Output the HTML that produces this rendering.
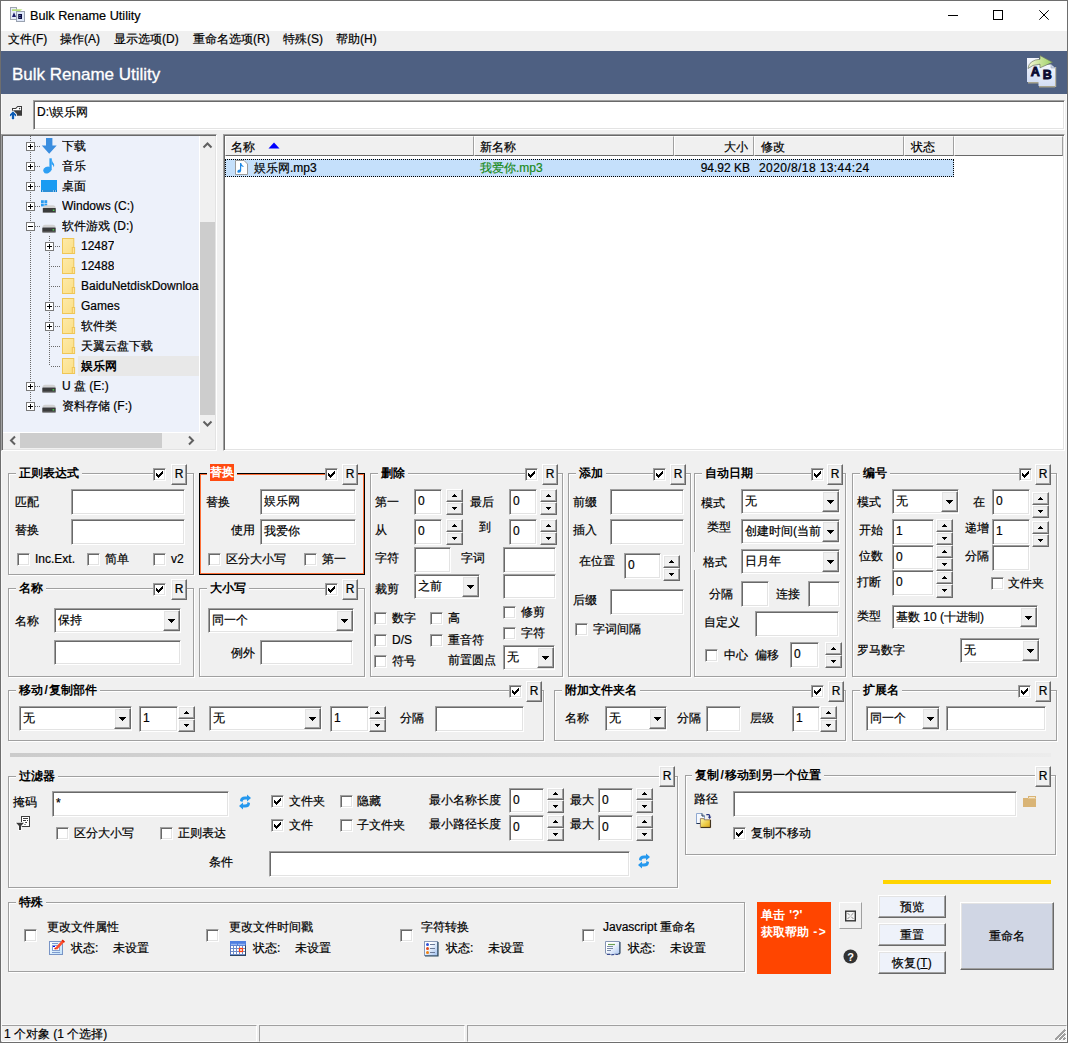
<!DOCTYPE html><html><head><meta charset="utf-8"><style>
*{box-sizing:content-box}
body{margin:0;width:1068px;height:1043px;overflow:hidden;background:#f0f0f0;font-family:"Liberation Sans",sans-serif;font-size:12px;color:#000;position:relative}
.t{position:absolute;white-space:nowrap;line-height:16px;-webkit-text-stroke:0.2px currentColor}
.ed{position:absolute;background:#fff;border:1px solid;border-color:#a0a0a0 #fff #fff #a0a0a0;box-shadow:inset 1px 1px 0 #696969,inset -1px -1px 0 #e3e3e3}
.bt{position:absolute;border:1px solid;border-color:#fff #696969 #696969 #fff;box-shadow:inset -1px -1px 0 #a0a0a0,inset 1px 1px 0 #e3e3e3}
.cb{position:absolute;background:#fff;border:1px solid;border-color:#a0a0a0 #fff #fff #a0a0a0;box-shadow:inset 1px 1px 0 #696969,inset -1px -1px 0 #e3e3e3}
.gb{position:absolute;border:1px solid #a0a0a0;box-shadow:inset 1px 1px 0 #fff,1px 1px 0 #fff}
.gt{font-weight:bold;background:#f0f0f0;-webkit-text-stroke:0}
</style></head><body>

<div style="position:absolute;left:0px;top:0px;width:1068px;height:1043px;box-sizing:border-box;border:1px solid #6e6e6e"></div>
<div style="position:absolute;left:1px;top:1px;width:1066px;height:1041px;box-sizing:border-box;border:1px solid #f8f8f8"></div>
<div style="position:absolute;left:1px;top:1px;width:1066px;height:30px;background:#fff"></div>
<svg style="position:absolute;left:9px;top:6px" width="16" height="16" viewBox="0 0 16 16">
<rect x="1.5" y="1.5" width="6" height="12" fill="#e6edf9" stroke="#a0a6b0"/><rect x="7.5" y="5.5" width="8" height="10" fill="#dfe8fa" stroke="#9aa2b0"/>
<path d="M3 11 L5 6.3 L7 11 Z" fill="#1c1c6a"/><rect x="9.2" y="8" width="3.8" height="5" fill="#0c0c40"/><rect x="10.2" y="9" width="1.4" height="1" fill="#7080c0"/><rect x="10.2" y="11" width="1.4" height="1" fill="#7080c0"/>
<path d="M3 3.2 H11 L13.5 3.5 L11 5 H3 Z" fill="#b8e07a"/></svg>
<div class="t" style="left:30px;top:7.5px;font-size:12.7px;line-height:16px;color:#000;">Bulk Rename Utility</div>
<div style="position:absolute;left:948px;top:15px;width:10px;height:1px;background:#000"></div>
<div style="position:absolute;left:993px;top:10px;width:10px;height:10px;box-sizing:border-box;border:1px solid #000"></div>
<svg style="position:absolute;left:1039px;top:10px" width="10" height="10"><path d="M0.3 0.3 L9.7 9.7 M9.7 0.3 L0.3 9.7" stroke="#000" stroke-width="1"/></svg>
<div style="position:absolute;left:1px;top:31px;width:1066px;height:20px;background:#f0f0f0"></div>
<div class="t" style="left:8px;top:31.0px;font-size:12px;line-height:16px;color:#000;">文件(F)</div>
<div class="t" style="left:60px;top:31.0px;font-size:12px;line-height:16px;color:#000;">操作(A)</div>
<div class="t" style="left:114px;top:31.0px;font-size:12px;line-height:16px;color:#000;">显示选项(D)</div>
<div class="t" style="left:193px;top:31.0px;font-size:12px;line-height:16px;color:#000;">重命名选项(R)</div>
<div class="t" style="left:283px;top:31.0px;font-size:12px;line-height:16px;color:#000;">特殊(S)</div>
<div class="t" style="left:336px;top:31.0px;font-size:12px;line-height:16px;color:#000;">帮助(H)</div>
<div style="position:absolute;left:1px;top:51px;width:1066px;height:43px;background:#4e6082"></div>
<div class="t" style="left:12px;top:64.5px;font-size:17px;line-height:20px;color:#fff;-webkit-text-stroke:0.3px #fff">Bulk Rename Utility</div>
<svg style="position:absolute;left:1018px;top:52px" width="46" height="40" viewBox="0 0 46 40">
<defs><linearGradient id="pg" x1="0" y1="0" x2="0" y2="1"><stop offset="0" stop-color="#f4f7fd"/><stop offset="1" stop-color="#d3def4"/></linearGradient>
<linearGradient id="ar" x1="0" y1="0" x2="1" y2="0"><stop offset="0" stop-color="#f6f8dc"/><stop offset="0.5" stop-color="#c9e49a"/><stop offset="1" stop-color="#9bd068"/></linearGradient></defs>
<rect x="10" y="30" width="12" height="1.5" fill="#a8a48e"/>
<rect x="9" y="6" width="12" height="24" fill="url(#pg)"/>
<rect x="21" y="34" width="16" height="1.5" fill="#a8a48e"/><rect x="37" y="15" width="1.2" height="20" fill="#b8b4a0"/>
<path d="M20.5 12.5 H33 L37 16 V34 H20.5 Z" fill="url(#pg)"/>
<path d="M33 12.5 V16 H37" fill="#c8d2e6" stroke="#9aa4b8" stroke-width="0.6"/>
<path d="M10 16.5 Q11 8 22 7.2 L22 3.5 L34.5 10.3 L22 15.8 L22 12.2 Q14 12.5 10 16.5 Z" fill="url(#ar)" stroke="#6c7460" stroke-width="0.7"/>
<text x="12.8" y="23.8" font-size="12.5" font-weight="bold" fill="#0a0a30" stroke="#0a0a30" stroke-width="0.9" font-family="Liberation Sans">A</text>
<text x="24.8" y="27" font-size="12.5" font-weight="bold" fill="#0a0a30" stroke="#0a0a30" stroke-width="0.9" font-family="Liberation Sans">B</text>
</svg>
<svg style="position:absolute;left:4px;top:98px" width="30" height="30" viewBox="4 98 30 30">
<path d="M12 108 H15.5 L17.5 106 H22 V115.8 H12 Z" fill="#3b3b3b"/>
<path d="M13 109 H16 L17.9 107 H21 V110.2 H13 Z" fill="#fff"/><circle cx="19.6" cy="108.6" r="0.8" fill="#3b3b3b"/>
<path d="M13 111.3 L16.1 114.4 L16.1 116.7 L14.2 114.9 L14.2 119.2 L11.8 119.2 L11.8 114.9 L9.9 116.7 L9.9 114.4 Z" fill="#fff" stroke="#fff" stroke-width="1.6"/>
<path d="M13 111.3 L16.1 114.4 L16.1 116.7 L14.2 114.9 L14.2 119.2 L11.8 119.2 L11.8 114.9 L9.9 116.7 L9.9 114.4 Z" fill="#0b5cb5"/>
</svg>
<div class="ed" style="left:33px;top:100px;width:1030px;height:28px"></div>
<div class="t" style="left:37px;top:104.0px;font-size:12px;line-height:16px;color:#000;">D:\娱乐网</div>
<div style="position:absolute;left:1px;top:134px;width:214px;height:315px;border:1px solid;border-color:#a0a0a0 #fff #fff #a0a0a0;box-shadow:inset 1px 1px 0 #696969,inset -1px -1px 0 #e3e3e3;background:#f0f0f0"></div>
<div style="position:absolute;left:3px;top:136px;width:196px;height:296px;background:#edf1fa"></div>
<div style="position:absolute;left:199px;top:136px;width:1px;height:297px;background:#fff"></div>
<div style="position:absolute;left:3px;top:432px;width:197px;height:1px;background:#fff"></div>
<div style="position:absolute;left:200px;top:222px;width:15px;height:193px;background:#cdcdcd"></div>
<svg style="position:absolute;left:200px;top:136px" width="15" height="17"><path d="M3.5 11.5 L7.5 7.5 L11.5 11.5" stroke="#606060" stroke-width="2" fill="none"/></svg>
<svg style="position:absolute;left:200px;top:415px" width="15" height="17"><path d="M3.5 6.5 L7.5 10.5 L11.5 6.5" stroke="#606060" stroke-width="2" fill="none"/></svg>
<div style="position:absolute;left:20px;top:433px;width:142px;height:15px;background:#cdcdcd"></div>
<svg style="position:absolute;left:3px;top:433px" width="17" height="15"><path d="M13 3.5 L9 7.5 L13 11.5" stroke="#606060" stroke-width="2" fill="none" transform="translate(-1,0)"/></svg>
<svg style="position:absolute;left:183px;top:433px" width="17" height="15"><path d="M6 3.5 L10 7.5 L6 11.5" stroke="#606060" stroke-width="2" fill="none"/></svg>
<div style="position:absolute;left:30px;top:136px;width:1px;height:270px;background:repeating-linear-gradient(to bottom,#6a6a6a 0 1px,transparent 1px 2px)"></div>
<div style="position:absolute;left:49px;top:236px;width:1px;height:130px;background:repeating-linear-gradient(to bottom,#6a6a6a 0 1px,transparent 1px 2px)"></div>
<div style="position:absolute;left:31px;top:146px;width:9px;height:1px;background:repeating-linear-gradient(to right,#6a6a6a 0 1px,transparent 1px 2px)"></div>
<div style="position:absolute;left:26px;top:142px;width:7px;height:7px;border:1px solid #7a7a7a;background:#fff"></div>
<div style="position:absolute;left:28px;top:146px;width:5px;height:1px;background:#000"></div>
<div style="position:absolute;left:30px;top:144px;width:1px;height:5px;background:#000"></div>
<div style="position:absolute;left:41px;top:138px;width:16px;height:16px"><svg width="16" height="16" viewBox="0 0 16 16"><path d="M5 0 L11.4 0 L11.4 7.6 L15.7 7.6 L8.2 15.7 L0.8 7.6 L5 7.6 Z" fill="#3a8ddf"/></svg></div>
<div class="t" style="left:62px;top:138px;max-width:137px;overflow:hidden">下载</div>
<div style="position:absolute;left:31px;top:166px;width:9px;height:1px;background:repeating-linear-gradient(to right,#6a6a6a 0 1px,transparent 1px 2px)"></div>
<div style="position:absolute;left:26px;top:162px;width:7px;height:7px;border:1px solid #7a7a7a;background:#fff"></div>
<div style="position:absolute;left:28px;top:166px;width:5px;height:1px;background:#000"></div>
<div style="position:absolute;left:30px;top:164px;width:1px;height:5px;background:#000"></div>
<div style="position:absolute;left:41px;top:158px;width:16px;height:16px"><svg width="16" height="16" viewBox="0 0 16 16"><ellipse cx="6.2" cy="12" rx="4" ry="3.3" fill="#2d9ff4" transform="rotate(-25 6.2 12)"/><rect x="8.4" y="0.3" width="2.3" height="12" fill="#2d9ff4"/><path d="M10.5 0.3 Q11 4 13 6 Q13.5 8 12.8 9.2 Q12.3 6.8 10.5 6 Z" fill="#2d9ff4"/></svg></div>
<div class="t" style="left:62px;top:158px;max-width:137px;overflow:hidden">音乐</div>
<div style="position:absolute;left:31px;top:186px;width:9px;height:1px;background:repeating-linear-gradient(to right,#6a6a6a 0 1px,transparent 1px 2px)"></div>
<div style="position:absolute;left:26px;top:182px;width:7px;height:7px;border:1px solid #7a7a7a;background:#fff"></div>
<div style="position:absolute;left:28px;top:186px;width:5px;height:1px;background:#000"></div>
<div style="position:absolute;left:30px;top:184px;width:1px;height:5px;background:#000"></div>
<div style="position:absolute;left:41px;top:178px;width:16px;height:16px"><svg width="16" height="16" viewBox="0 0 16 16"><rect x="0" y="2" width="16" height="12" fill="#189bf2"/><rect x="0" y="12" width="16" height="2" fill="#0f7fd0"/><rect x="1" y="12.5" width="1" height="1" fill="#fff"/><rect x="12" y="12.5" width="1" height="1" fill="#fff"/><rect x="14" y="12.5" width="1" height="1" fill="#fff"/><rect x="2" y="12.8" width="10" height="0.4" fill="#9fd4f8"/></svg></div>
<div class="t" style="left:62px;top:178px;max-width:137px;overflow:hidden">桌面</div>
<div style="position:absolute;left:31px;top:206px;width:9px;height:1px;background:repeating-linear-gradient(to right,#6a6a6a 0 1px,transparent 1px 2px)"></div>
<div style="position:absolute;left:26px;top:202px;width:7px;height:7px;border:1px solid #7a7a7a;background:#fff"></div>
<div style="position:absolute;left:28px;top:206px;width:5px;height:1px;background:#000"></div>
<div style="position:absolute;left:30px;top:204px;width:1px;height:5px;background:#000"></div>
<div style="position:absolute;left:41px;top:198px;width:16px;height:16px"><svg width="16" height="16" viewBox="0 0 16 16"><rect x="0" y="2.2" width="2.8" height="2.8" fill="#2b9cf2"/><rect x="3.4" y="2.2" width="2.8" height="2.8" fill="#2b9cf2"/><rect x="0" y="5.6" width="2.8" height="2.8" fill="#2b9cf2"/><rect x="3.4" y="5.6" width="2.8" height="2.8" fill="#2b9cf2"/><path d="M2 10 Q2.3 7.3 4.5 7.3 L12.3 7.3 Q14.5 7.3 14.8 10 Z" fill="#d2d2d2"/><rect x="1.8" y="10" width="13" height="4.7" rx="0.6" fill="#3b3b3b"/><rect x="1.8" y="14" width="13" height="0.7" fill="#8a8a8a"/><rect x="11.8" y="11.6" width="1.6" height="1.3" fill="#4fe04f"/></svg></div>
<div class="t" style="left:62px;top:198px;max-width:137px;overflow:hidden">Windows (C:)</div>
<div style="position:absolute;left:31px;top:226px;width:9px;height:1px;background:repeating-linear-gradient(to right,#6a6a6a 0 1px,transparent 1px 2px)"></div>
<div style="position:absolute;left:26px;top:222px;width:7px;height:7px;border:1px solid #7a7a7a;background:#fff"></div>
<div style="position:absolute;left:28px;top:226px;width:5px;height:1px;background:#000"></div>
<div style="position:absolute;left:41px;top:218px;width:16px;height:16px"><svg width="16" height="16" viewBox="0 0 16 16"><path d="M1.4 9.5 Q1.7 6.7 4 6.7 L12 6.7 Q14.4 6.7 14.7 9.5 Z" fill="#d2d2d2"/><rect x="1.3" y="9.5" width="13.4" height="4.9" rx="0.6" fill="#3b3b3b"/><rect x="1.3" y="13.7" width="13.4" height="0.7" fill="#8a8a8a"/><rect x="11.6" y="11.2" width="1.6" height="1.3" fill="#4fe04f"/></svg></div>
<div class="t" style="left:62px;top:218px;max-width:137px;overflow:hidden">软件游戏 (D:)</div>
<div style="position:absolute;left:51px;top:246px;width:10px;height:1px;background:repeating-linear-gradient(to right,#6a6a6a 0 1px,transparent 1px 2px)"></div>
<div style="position:absolute;left:45px;top:242px;width:7px;height:7px;border:1px solid #7a7a7a;background:#fff"></div>
<div style="position:absolute;left:47px;top:246px;width:5px;height:1px;background:#000"></div>
<div style="position:absolute;left:49px;top:244px;width:1px;height:5px;background:#000"></div>
<div style="position:absolute;left:62px;top:238px;width:16px;height:16px"><svg width="16" height="16" viewBox="0 0 16 16"><defs><linearGradient id="fg" x1="0" y1="0" x2="1" y2="1"><stop offset="0" stop-color="#fdeaa8"/><stop offset="1" stop-color="#fbdf86"/></linearGradient></defs><rect x="0.5" y="0.5" width="11.3" height="15" fill="url(#fg)" stroke="#efc655"/><rect x="10.3" y="9.5" width="2.3" height="6" fill="#fde39a" stroke="#efc655"/></svg></div>
<div class="t" style="left:81px;top:238px;max-width:118px;overflow:hidden">12487</div>
<div style="position:absolute;left:51px;top:266px;width:10px;height:1px;background:repeating-linear-gradient(to right,#6a6a6a 0 1px,transparent 1px 2px)"></div>
<div style="position:absolute;left:62px;top:258px;width:16px;height:16px"><svg width="16" height="16" viewBox="0 0 16 16"><defs><linearGradient id="fg" x1="0" y1="0" x2="1" y2="1"><stop offset="0" stop-color="#fdeaa8"/><stop offset="1" stop-color="#fbdf86"/></linearGradient></defs><rect x="0.5" y="0.5" width="11.3" height="15" fill="url(#fg)" stroke="#efc655"/><rect x="10.3" y="9.5" width="2.3" height="6" fill="#fde39a" stroke="#efc655"/></svg></div>
<div class="t" style="left:81px;top:258px;max-width:118px;overflow:hidden">12488</div>
<div style="position:absolute;left:51px;top:286px;width:10px;height:1px;background:repeating-linear-gradient(to right,#6a6a6a 0 1px,transparent 1px 2px)"></div>
<div style="position:absolute;left:62px;top:278px;width:16px;height:16px"><svg width="16" height="16" viewBox="0 0 16 16"><defs><linearGradient id="fg" x1="0" y1="0" x2="1" y2="1"><stop offset="0" stop-color="#fdeaa8"/><stop offset="1" stop-color="#fbdf86"/></linearGradient></defs><rect x="0.5" y="0.5" width="11.3" height="15" fill="url(#fg)" stroke="#efc655"/><rect x="10.3" y="9.5" width="2.3" height="6" fill="#fde39a" stroke="#efc655"/></svg></div>
<div class="t" style="left:81px;top:278px;max-width:118px;overflow:hidden">BaiduNetdiskDownload</div>
<div style="position:absolute;left:51px;top:306px;width:10px;height:1px;background:repeating-linear-gradient(to right,#6a6a6a 0 1px,transparent 1px 2px)"></div>
<div style="position:absolute;left:45px;top:302px;width:7px;height:7px;border:1px solid #7a7a7a;background:#fff"></div>
<div style="position:absolute;left:47px;top:306px;width:5px;height:1px;background:#000"></div>
<div style="position:absolute;left:49px;top:304px;width:1px;height:5px;background:#000"></div>
<div style="position:absolute;left:62px;top:298px;width:16px;height:16px"><svg width="16" height="16" viewBox="0 0 16 16"><defs><linearGradient id="fg" x1="0" y1="0" x2="1" y2="1"><stop offset="0" stop-color="#fdeaa8"/><stop offset="1" stop-color="#fbdf86"/></linearGradient></defs><rect x="0.5" y="0.5" width="11.3" height="15" fill="url(#fg)" stroke="#efc655"/><rect x="10.3" y="9.5" width="2.3" height="6" fill="#fde39a" stroke="#efc655"/></svg></div>
<div class="t" style="left:81px;top:298px;max-width:118px;overflow:hidden">Games</div>
<div style="position:absolute;left:51px;top:326px;width:10px;height:1px;background:repeating-linear-gradient(to right,#6a6a6a 0 1px,transparent 1px 2px)"></div>
<div style="position:absolute;left:45px;top:322px;width:7px;height:7px;border:1px solid #7a7a7a;background:#fff"></div>
<div style="position:absolute;left:47px;top:326px;width:5px;height:1px;background:#000"></div>
<div style="position:absolute;left:49px;top:324px;width:1px;height:5px;background:#000"></div>
<div style="position:absolute;left:62px;top:318px;width:16px;height:16px"><svg width="16" height="16" viewBox="0 0 16 16"><defs><linearGradient id="fg" x1="0" y1="0" x2="1" y2="1"><stop offset="0" stop-color="#fdeaa8"/><stop offset="1" stop-color="#fbdf86"/></linearGradient></defs><rect x="0.5" y="0.5" width="11.3" height="15" fill="url(#fg)" stroke="#efc655"/><rect x="10.3" y="9.5" width="2.3" height="6" fill="#fde39a" stroke="#efc655"/></svg></div>
<div class="t" style="left:81px;top:318px;max-width:118px;overflow:hidden">软件类</div>
<div style="position:absolute;left:51px;top:346px;width:10px;height:1px;background:repeating-linear-gradient(to right,#6a6a6a 0 1px,transparent 1px 2px)"></div>
<div style="position:absolute;left:62px;top:338px;width:16px;height:16px"><svg width="16" height="16" viewBox="0 0 16 16"><defs><linearGradient id="fg" x1="0" y1="0" x2="1" y2="1"><stop offset="0" stop-color="#fdeaa8"/><stop offset="1" stop-color="#fbdf86"/></linearGradient></defs><rect x="0.5" y="0.5" width="11.3" height="15" fill="url(#fg)" stroke="#efc655"/><rect x="10.3" y="9.5" width="2.3" height="6" fill="#fde39a" stroke="#efc655"/></svg></div>
<div class="t" style="left:81px;top:338px;max-width:118px;overflow:hidden">天翼云盘下载</div>
<div style="position:absolute;left:51px;top:366px;width:10px;height:1px;background:repeating-linear-gradient(to right,#6a6a6a 0 1px,transparent 1px 2px)"></div>
<div style="position:absolute;left:78px;top:356px;width:121px;height:20px;background:#e8e8e8"></div>
<div style="position:absolute;left:62px;top:358px;width:16px;height:16px"><svg width="16" height="16" viewBox="0 0 16 16"><defs><linearGradient id="fg" x1="0" y1="0" x2="1" y2="1"><stop offset="0" stop-color="#fdeaa8"/><stop offset="1" stop-color="#fbdf86"/></linearGradient></defs><rect x="0.5" y="0.5" width="11.3" height="15" fill="url(#fg)" stroke="#efc655"/><rect x="10.3" y="9.5" width="2.3" height="6" fill="#fde39a" stroke="#efc655"/></svg></div>
<div class="t" style="left:81px;top:358px;font-weight:bold;-webkit-text-stroke:0;max-width:118px;overflow:hidden">娱乐网</div>
<div style="position:absolute;left:31px;top:386px;width:9px;height:1px;background:repeating-linear-gradient(to right,#6a6a6a 0 1px,transparent 1px 2px)"></div>
<div style="position:absolute;left:26px;top:382px;width:7px;height:7px;border:1px solid #7a7a7a;background:#fff"></div>
<div style="position:absolute;left:28px;top:386px;width:5px;height:1px;background:#000"></div>
<div style="position:absolute;left:30px;top:384px;width:1px;height:5px;background:#000"></div>
<div style="position:absolute;left:41px;top:378px;width:16px;height:16px"><svg width="16" height="16" viewBox="0 0 16 16"><path d="M1.4 9.5 Q1.7 6.7 4 6.7 L12 6.7 Q14.4 6.7 14.7 9.5 Z" fill="#d2d2d2"/><rect x="1.3" y="9.5" width="13.4" height="4.9" rx="0.6" fill="#3b3b3b"/><rect x="1.3" y="13.7" width="13.4" height="0.7" fill="#8a8a8a"/><rect x="11.6" y="11.2" width="1.6" height="1.3" fill="#4fe04f"/></svg></div>
<div class="t" style="left:62px;top:378px;max-width:137px;overflow:hidden">U 盘 (E:)</div>
<div style="position:absolute;left:31px;top:406px;width:9px;height:1px;background:repeating-linear-gradient(to right,#6a6a6a 0 1px,transparent 1px 2px)"></div>
<div style="position:absolute;left:26px;top:402px;width:7px;height:7px;border:1px solid #7a7a7a;background:#fff"></div>
<div style="position:absolute;left:28px;top:406px;width:5px;height:1px;background:#000"></div>
<div style="position:absolute;left:30px;top:404px;width:1px;height:5px;background:#000"></div>
<div style="position:absolute;left:41px;top:398px;width:16px;height:16px"><svg width="16" height="16" viewBox="0 0 16 16"><path d="M1.4 9.5 Q1.7 6.7 4 6.7 L12 6.7 Q14.4 6.7 14.7 9.5 Z" fill="#d2d2d2"/><rect x="1.3" y="9.5" width="13.4" height="4.9" rx="0.6" fill="#3b3b3b"/><rect x="1.3" y="13.7" width="13.4" height="0.7" fill="#8a8a8a"/><rect x="11.6" y="11.2" width="1.6" height="1.3" fill="#4fe04f"/></svg></div>
<div class="t" style="left:62px;top:398px;max-width:137px;overflow:hidden">资料存储 (F:)</div>
<div style="position:absolute;left:223px;top:134px;width:840px;height:315px;border:1px solid;border-color:#a0a0a0 #fff #fff #a0a0a0;box-shadow:inset 1px 1px 0 #696969,inset -1px -1px 0 #e3e3e3;background:#fff"></div>
<div style="position:absolute;left:225px;top:136px;width:247px;height:18px;background:#f0f0f0;border:1px solid;border-color:#fff #a0a0a0 #696969 #fff"></div>
<div style="position:absolute;left:474px;top:136px;width:198px;height:18px;background:#f0f0f0;border:1px solid;border-color:#fff #a0a0a0 #696969 #fff"></div>
<div style="position:absolute;left:674px;top:136px;width:78px;height:18px;background:#f0f0f0;border:1px solid;border-color:#fff #a0a0a0 #696969 #fff"></div>
<div style="position:absolute;left:754px;top:136px;width:148px;height:18px;background:#f0f0f0;border:1px solid;border-color:#fff #a0a0a0 #696969 #fff"></div>
<div style="position:absolute;left:904px;top:136px;width:48px;height:18px;background:#f0f0f0;border:1px solid;border-color:#fff #a0a0a0 #696969 #fff"></div>
<div style="position:absolute;left:954px;top:136px;width:107px;height:18px;background:#f0f0f0;border:1px solid;border-color:#fff #a0a0a0 #696969 #fff"></div>
<div class="t" style="left:231px;top:139.0px;font-size:12px;line-height:16px;color:#000;">名称</div>
<svg style="position:absolute;left:268px;top:142px" width="12" height="7"><path d="M0.5 6.5 L6 0.5 L11.5 6.5 Z" fill="#0000ff"/></svg>
<div class="t" style="left:480px;top:139.0px;font-size:12px;line-height:16px;color:#000;">新名称</div>
<div class="t" style="right:320px;top:139.0px;font-size:12px;line-height:16px;color:#000;">大小</div>
<div class="t" style="left:761px;top:139.0px;font-size:12px;line-height:16px;color:#000;">修改</div>
<div class="t" style="left:911px;top:139.0px;font-size:12px;line-height:16px;color:#000;">状态</div>
<div style="position:absolute;left:225px;top:159px;width:727px;height:16px;background:#c5e0fb;border:1px dotted #000"></div>
<svg style="position:absolute;left:235px;top:160px" width="13" height="15" viewBox="0 0 13 15"><path d="M0.5 0.5 L9 0.5 L12.5 4 L12.5 14.5 L0.5 14.5 Z" fill="#fff" stroke="#9a9a9a"/><path d="M5 3 L6.2 3 Q6.5 5.5 9 6.5 Q7.5 7.3 6.2 6 L6.2 10.5 Q6.2 12.8 3.8 12.8 Q2 12.8 2.3 11.2 Q2.7 9.5 5 9.6 Z" fill="#1e88e5"/></svg>
<div class="t" style="left:254px;top:159.5px;font-size:12px;line-height:16px;color:#000;">娱乐网.mp3</div>
<div class="t" style="left:480px;top:159.5px;font-size:12px;line-height:16px;color:#1a8a1a;">我爱你.mp3</div>
<div class="t" style="right:318px;top:159.5px;font-size:12px;line-height:16px;color:#000;">94.92 KB</div>
<div class="t" style="left:759px;top:159.5px;font-size:12px;line-height:16px;color:#000;letter-spacing:0.4px">2020/8/18 13:44:24</div>
<div class="gb" style="left:8px;top:473px;width:184px;height:100px"></div>
<div class="t gt" style="left:16px;top:465px;padding:0 3px">正则表达式</div>
<div style="position:absolute;left:166px;top:472px;width:5px;height:3px;background:#f0f0f0"></div>
<div class="cb" style="left:153px;top:468px;width:11px;height:11px"></div>
<div style="position:absolute;left:156px;top:471px;width:7px;height:7px;line-height:0"><svg width="7" height="7" shape-rendering="crispEdges" fill="#000"><rect x="6" y="0" width="1" height="1"/><rect x="5" y="1" width="2" height="1"/><rect x="0" y="2" width="1" height="1"/><rect x="4" y="2" width="3" height="1"/><rect x="0" y="3" width="2" height="1"/><rect x="3" y="3" width="3" height="1"/><rect x="0" y="4" width="5" height="1"/><rect x="1" y="5" width="3" height="1"/><rect x="2" y="6" width="1" height="1"/></svg></div>
<div class="bt" style="left:171px;top:464px;width:14px;height:19px;background:#f0f0f0"></div>
<div class="t" style="left:171px;top:464px;width:16px;height:21px;line-height:21px;text-align:center;font-size:12px;">R</div>
<div class="t" style="left:15px;top:494.0px;font-size:12px;line-height:16px;color:#000;">匹配</div>
<div class="ed" style="left:71px;top:489px;width:112px;height:24px"></div>
<div class="t" style="left:15px;top:522.0px;font-size:12px;line-height:16px;color:#000;">替换</div>
<div class="ed" style="left:71px;top:519px;width:112px;height:24px"></div>
<div class="cb" style="left:17px;top:553px;width:11px;height:11px"></div>
<div class="t" style="left:35px;top:551.0px;font-size:12px;line-height:16px;color:#000;">Inc.Ext.</div>
<div class="cb" style="left:87px;top:553px;width:11px;height:11px"></div>
<div class="t" style="left:105px;top:551.0px;font-size:12px;line-height:16px;color:#000;">简单</div>
<div class="cb" style="left:153px;top:553px;width:11px;height:11px"></div>
<div class="t" style="left:171px;top:551.0px;font-size:12px;line-height:16px;color:#000;">v2</div>
<div style="position:absolute;left:199px;top:473px;width:164px;height:100px;border:1px solid #000;box-shadow:inset 1px 1px 0 #ff7038, inset -1px -1px 0 #ff7038"></div>
<div style="position:absolute;left:207px;top:471px;width:30px;height:4px;background:#f0f0f0"></div>
<div class="t" style="left:210px;top:464px;width:24px;height:17px;line-height:17px;background:#ff4a10;color:#fff;font-weight:bold;-webkit-text-stroke:0">替换</div>
<div style="position:absolute;left:338px;top:472px;width:4px;height:3px;background:#f0f0f0"></div>
<div class="cb" style="left:325px;top:468px;width:11px;height:11px"></div>
<div style="position:absolute;left:328px;top:471px;width:7px;height:7px;line-height:0"><svg width="7" height="7" shape-rendering="crispEdges" fill="#000"><rect x="6" y="0" width="1" height="1"/><rect x="5" y="1" width="2" height="1"/><rect x="0" y="2" width="1" height="1"/><rect x="4" y="2" width="3" height="1"/><rect x="0" y="3" width="2" height="1"/><rect x="3" y="3" width="3" height="1"/><rect x="0" y="4" width="5" height="1"/><rect x="1" y="5" width="3" height="1"/><rect x="2" y="6" width="1" height="1"/></svg></div>
<div class="bt" style="left:342px;top:464px;width:14px;height:19px;background:#f0f0f0"></div>
<div class="t" style="left:342px;top:464px;width:16px;height:21px;line-height:21px;text-align:center;font-size:12px;">R</div>
<div class="t" style="left:206px;top:494.0px;font-size:12px;line-height:16px;color:#000;">替换</div>
<div class="ed" style="left:260px;top:489px;width:94px;height:24px"></div>
<div class="t" style="left:264px;top:493.0px;font-size:12px;line-height:16px;color:#000;">娱乐网</div>
<div class="t" style="left:231px;top:522.0px;font-size:12px;line-height:16px;color:#000;">使用</div>
<div class="ed" style="left:260px;top:519px;width:94px;height:24px"></div>
<div class="t" style="left:264px;top:523.0px;font-size:12px;line-height:16px;color:#000;">我爱你</div>
<div class="cb" style="left:208px;top:553px;width:11px;height:11px"></div>
<div class="t" style="left:226px;top:551.0px;font-size:12px;line-height:16px;color:#000;">区分大小写</div>
<div class="cb" style="left:304px;top:553px;width:11px;height:11px"></div>
<div class="t" style="left:322px;top:551.0px;font-size:12px;line-height:16px;color:#000;">第一</div>
<div class="gb" style="left:8px;top:588px;width:184px;height:87px"></div>
<div class="t gt" style="left:16px;top:580px;padding:0 3px">名称</div>
<div style="position:absolute;left:166px;top:587px;width:5px;height:3px;background:#f0f0f0"></div>
<div class="cb" style="left:153px;top:583px;width:11px;height:11px"></div>
<div style="position:absolute;left:156px;top:586px;width:7px;height:7px;line-height:0"><svg width="7" height="7" shape-rendering="crispEdges" fill="#000"><rect x="6" y="0" width="1" height="1"/><rect x="5" y="1" width="2" height="1"/><rect x="0" y="2" width="1" height="1"/><rect x="4" y="2" width="3" height="1"/><rect x="0" y="3" width="2" height="1"/><rect x="3" y="3" width="3" height="1"/><rect x="0" y="4" width="5" height="1"/><rect x="1" y="5" width="3" height="1"/><rect x="2" y="6" width="1" height="1"/></svg></div>
<div class="bt" style="left:171px;top:579px;width:14px;height:19px;background:#f0f0f0"></div>
<div class="t" style="left:171px;top:579px;width:16px;height:21px;line-height:21px;text-align:center;font-size:12px;">R</div>
<div class="t" style="left:15px;top:613.0px;font-size:12px;line-height:16px;color:#000;">名称</div>
<div class="ed" style="left:54px;top:608px;width:125px;height:23px"></div>
<div class="bt" style="left:163px;top:610px;width:15px;height:19px;background:#f0f0f0"></div>
<svg style="position:absolute;left:168px;top:619px" width="7" height="4" fill="#000" shape-rendering="crispEdges"><rect x="0" y="0" width="7" height="1"/><rect x="1" y="1" width="5" height="1"/><rect x="2" y="2" width="3" height="1"/><rect x="3" y="3" width="1" height="1"/></svg>
<div class="t" style="left:58px;top:612px;width:104px;overflow:hidden;line-height:16px">保持</div>
<div class="ed" style="left:54px;top:640px;width:125px;height:23px"></div>
<div class="gb" style="left:199px;top:588px;width:164px;height:87px"></div>
<div class="t gt" style="left:207px;top:580px;padding:0 3px">大小写</div>
<div style="position:absolute;left:338px;top:587px;width:4px;height:3px;background:#f0f0f0"></div>
<div class="cb" style="left:325px;top:583px;width:11px;height:11px"></div>
<div style="position:absolute;left:328px;top:586px;width:7px;height:7px;line-height:0"><svg width="7" height="7" shape-rendering="crispEdges" fill="#000"><rect x="6" y="0" width="1" height="1"/><rect x="5" y="1" width="2" height="1"/><rect x="0" y="2" width="1" height="1"/><rect x="4" y="2" width="3" height="1"/><rect x="0" y="3" width="2" height="1"/><rect x="3" y="3" width="3" height="1"/><rect x="0" y="4" width="5" height="1"/><rect x="1" y="5" width="3" height="1"/><rect x="2" y="6" width="1" height="1"/></svg></div>
<div class="bt" style="left:342px;top:579px;width:14px;height:19px;background:#f0f0f0"></div>
<div class="t" style="left:342px;top:579px;width:16px;height:21px;line-height:21px;text-align:center;font-size:12px;">R</div>
<div class="ed" style="left:208px;top:608px;width:144px;height:23px"></div>
<div class="bt" style="left:336px;top:610px;width:15px;height:19px;background:#f0f0f0"></div>
<svg style="position:absolute;left:341px;top:619px" width="7" height="4" fill="#000" shape-rendering="crispEdges"><rect x="0" y="0" width="7" height="1"/><rect x="1" y="1" width="5" height="1"/><rect x="2" y="2" width="3" height="1"/><rect x="3" y="3" width="1" height="1"/></svg>
<div class="t" style="left:212px;top:612px;width:123px;overflow:hidden;line-height:16px">同一个</div>
<div class="t" style="left:231px;top:645.0px;font-size:12px;line-height:16px;color:#000;">例外</div>
<div class="ed" style="left:260px;top:640px;width:91px;height:23px"></div>
<div class="gb" style="left:370px;top:473px;width:191px;height:202px"></div>
<div class="t gt" style="left:378px;top:465px;padding:0 3px">删除</div>
<div style="position:absolute;left:538px;top:472px;width:4px;height:3px;background:#f0f0f0"></div>
<div class="cb" style="left:525px;top:468px;width:11px;height:11px"></div>
<div style="position:absolute;left:528px;top:471px;width:7px;height:7px;line-height:0"><svg width="7" height="7" shape-rendering="crispEdges" fill="#000"><rect x="6" y="0" width="1" height="1"/><rect x="5" y="1" width="2" height="1"/><rect x="0" y="2" width="1" height="1"/><rect x="4" y="2" width="3" height="1"/><rect x="0" y="3" width="2" height="1"/><rect x="3" y="3" width="3" height="1"/><rect x="0" y="4" width="5" height="1"/><rect x="1" y="5" width="3" height="1"/><rect x="2" y="6" width="1" height="1"/></svg></div>
<div class="bt" style="left:542px;top:464px;width:14px;height:19px;background:#f0f0f0"></div>
<div class="t" style="left:542px;top:464px;width:16px;height:21px;line-height:21px;text-align:center;font-size:12px;">R</div>
<div class="t" style="left:375px;top:494.0px;font-size:12px;line-height:16px;color:#000;">第一</div>
<div class="ed" style="left:414px;top:489px;width:26px;height:24px"></div>
<div class="t" style="left:418px;top:493.0px;font-size:12px;line-height:16px;color:#000;">0</div>
<div class="bt" style="left:446px;top:489px;width:15px;height:11px;background:#f0f0f0"></div>
<div class="bt" style="left:446px;top:502px;width:15px;height:11px;background:#f0f0f0"></div>
<svg style="position:absolute;left:452px;top:494px" width="5" height="3" fill="#000" shape-rendering="crispEdges"><rect x="2" y="0" width="1" height="1"/><rect x="1" y="1" width="3" height="1"/><rect x="0" y="2" width="5" height="1"/></svg>
<svg style="position:absolute;left:452px;top:507px" width="5" height="3" fill="#000" shape-rendering="crispEdges"><rect x="0" y="0" width="5" height="1"/><rect x="1" y="1" width="3" height="1"/><rect x="2" y="2" width="1" height="1"/></svg>
<div class="t" style="left:470px;top:494.0px;font-size:12px;line-height:16px;color:#000;">最后</div>
<div class="ed" style="left:509px;top:489px;width:26px;height:24px"></div>
<div class="t" style="left:513px;top:493.0px;font-size:12px;line-height:16px;color:#000;">0</div>
<div class="bt" style="left:540px;top:489px;width:15px;height:11px;background:#f0f0f0"></div>
<div class="bt" style="left:540px;top:502px;width:15px;height:11px;background:#f0f0f0"></div>
<svg style="position:absolute;left:546px;top:494px" width="5" height="3" fill="#000" shape-rendering="crispEdges"><rect x="2" y="0" width="1" height="1"/><rect x="1" y="1" width="3" height="1"/><rect x="0" y="2" width="5" height="1"/></svg>
<svg style="position:absolute;left:546px;top:507px" width="5" height="3" fill="#000" shape-rendering="crispEdges"><rect x="0" y="0" width="5" height="1"/><rect x="1" y="1" width="3" height="1"/><rect x="2" y="2" width="1" height="1"/></svg>
<div class="t" style="left:375px;top:522.0px;font-size:12px;line-height:16px;color:#000;">从</div>
<div class="ed" style="left:414px;top:519px;width:26px;height:24px"></div>
<div class="t" style="left:418px;top:523.0px;font-size:12px;line-height:16px;color:#000;">0</div>
<div class="bt" style="left:446px;top:519px;width:15px;height:11px;background:#f0f0f0"></div>
<div class="bt" style="left:446px;top:532px;width:15px;height:11px;background:#f0f0f0"></div>
<svg style="position:absolute;left:452px;top:524px" width="5" height="3" fill="#000" shape-rendering="crispEdges"><rect x="2" y="0" width="1" height="1"/><rect x="1" y="1" width="3" height="1"/><rect x="0" y="2" width="5" height="1"/></svg>
<svg style="position:absolute;left:452px;top:537px" width="5" height="3" fill="#000" shape-rendering="crispEdges"><rect x="0" y="0" width="5" height="1"/><rect x="1" y="1" width="3" height="1"/><rect x="2" y="2" width="1" height="1"/></svg>
<div class="t" style="left:479px;top:519.0px;font-size:12px;line-height:16px;color:#000;">到</div>
<div class="ed" style="left:509px;top:519px;width:26px;height:24px"></div>
<div class="t" style="left:513px;top:523.0px;font-size:12px;line-height:16px;color:#000;">0</div>
<div class="bt" style="left:540px;top:519px;width:15px;height:11px;background:#f0f0f0"></div>
<div class="bt" style="left:540px;top:532px;width:15px;height:11px;background:#f0f0f0"></div>
<svg style="position:absolute;left:546px;top:524px" width="5" height="3" fill="#000" shape-rendering="crispEdges"><rect x="2" y="0" width="1" height="1"/><rect x="1" y="1" width="3" height="1"/><rect x="0" y="2" width="5" height="1"/></svg>
<svg style="position:absolute;left:546px;top:537px" width="5" height="3" fill="#000" shape-rendering="crispEdges"><rect x="0" y="0" width="5" height="1"/><rect x="1" y="1" width="3" height="1"/><rect x="2" y="2" width="1" height="1"/></svg>
<div class="t" style="left:375px;top:550.0px;font-size:12px;line-height:16px;color:#000;">字符</div>
<div class="ed" style="left:414px;top:547px;width:35px;height:24px"></div>
<div class="t" style="left:461px;top:550.0px;font-size:12px;line-height:16px;color:#000;">字词</div>
<div class="ed" style="left:503px;top:547px;width:51px;height:24px"></div>
<div class="t" style="left:375px;top:581.0px;font-size:12px;line-height:16px;color:#000;">裁剪</div>
<div class="ed" style="left:414px;top:574px;width:64px;height:23px"></div>
<div class="bt" style="left:462px;top:576px;width:15px;height:19px;background:#f0f0f0"></div>
<svg style="position:absolute;left:467px;top:585px" width="7" height="4" fill="#000" shape-rendering="crispEdges"><rect x="0" y="0" width="7" height="1"/><rect x="1" y="1" width="5" height="1"/><rect x="2" y="2" width="3" height="1"/><rect x="3" y="3" width="1" height="1"/></svg>
<div class="t" style="left:418px;top:578px;width:43px;overflow:hidden;line-height:16px">之前</div>
<div class="ed" style="left:503px;top:574px;width:51px;height:23px"></div>
<div class="cb" style="left:374px;top:612px;width:11px;height:11px"></div>
<div class="t" style="left:392px;top:610.0px;font-size:12px;line-height:16px;color:#000;">数字</div>
<div class="cb" style="left:430px;top:612px;width:11px;height:11px"></div>
<div class="t" style="left:448px;top:610.0px;font-size:12px;line-height:16px;color:#000;">高</div>
<div class="cb" style="left:374px;top:634px;width:11px;height:11px"></div>
<div class="t" style="left:392px;top:632.0px;font-size:12px;line-height:16px;color:#000;">D/S</div>
<div class="cb" style="left:430px;top:634px;width:11px;height:11px"></div>
<div class="t" style="left:448px;top:632.0px;font-size:12px;line-height:16px;color:#000;">重音符</div>
<div class="cb" style="left:374px;top:655px;width:11px;height:11px"></div>
<div class="t" style="left:392px;top:653.0px;font-size:12px;line-height:16px;color:#000;">符号</div>
<div class="cb" style="left:503px;top:606px;width:11px;height:11px"></div>
<div class="t" style="left:521px;top:604.0px;font-size:12px;line-height:16px;color:#000;">修剪</div>
<div class="cb" style="left:503px;top:627px;width:11px;height:11px"></div>
<div class="t" style="left:521px;top:625.0px;font-size:12px;line-height:16px;color:#000;">字符</div>
<div class="t" style="left:448px;top:652.0px;font-size:12px;line-height:16px;color:#000;">前置圆点</div>
<div class="ed" style="left:503px;top:645px;width:50px;height:23px"></div>
<div class="bt" style="left:537px;top:647px;width:15px;height:19px;background:#f0f0f0"></div>
<svg style="position:absolute;left:542px;top:656px" width="7" height="4" fill="#000" shape-rendering="crispEdges"><rect x="0" y="0" width="7" height="1"/><rect x="1" y="1" width="5" height="1"/><rect x="2" y="2" width="3" height="1"/><rect x="3" y="3" width="1" height="1"/></svg>
<div class="t" style="left:507px;top:649px;width:29px;overflow:hidden;line-height:16px">无</div>
<div class="gb" style="left:568px;top:473px;width:121px;height:202px"></div>
<div class="t gt" style="left:576px;top:465px;padding:0 3px">添加</div>
<div style="position:absolute;left:666px;top:472px;width:4px;height:3px;background:#f0f0f0"></div>
<div class="cb" style="left:653px;top:468px;width:11px;height:11px"></div>
<div style="position:absolute;left:656px;top:471px;width:7px;height:7px;line-height:0"><svg width="7" height="7" shape-rendering="crispEdges" fill="#000"><rect x="6" y="0" width="1" height="1"/><rect x="5" y="1" width="2" height="1"/><rect x="0" y="2" width="1" height="1"/><rect x="4" y="2" width="3" height="1"/><rect x="0" y="3" width="2" height="1"/><rect x="3" y="3" width="3" height="1"/><rect x="0" y="4" width="5" height="1"/><rect x="1" y="5" width="3" height="1"/><rect x="2" y="6" width="1" height="1"/></svg></div>
<div class="bt" style="left:670px;top:464px;width:14px;height:19px;background:#f0f0f0"></div>
<div class="t" style="left:670px;top:464px;width:16px;height:21px;line-height:21px;text-align:center;font-size:12px;">R</div>
<div class="t" style="left:573px;top:494.0px;font-size:12px;line-height:16px;color:#000;">前缀</div>
<div class="ed" style="left:610px;top:489px;width:72px;height:24px"></div>
<div class="t" style="left:573px;top:522.0px;font-size:12px;line-height:16px;color:#000;">插入</div>
<div class="ed" style="left:610px;top:519px;width:72px;height:24px"></div>
<div class="t" style="left:579px;top:553.0px;font-size:12px;line-height:16px;color:#000;">在位置</div>
<div class="ed" style="left:624px;top:553px;width:35px;height:24px"></div>
<div class="t" style="left:628px;top:557.0px;font-size:12px;line-height:16px;color:#000;">0</div>
<div class="bt" style="left:663px;top:555px;width:15px;height:11px;background:#f0f0f0"></div>
<div class="bt" style="left:663px;top:568px;width:15px;height:11px;background:#f0f0f0"></div>
<svg style="position:absolute;left:669px;top:560px" width="5" height="3" fill="#000" shape-rendering="crispEdges"><rect x="2" y="0" width="1" height="1"/><rect x="1" y="1" width="3" height="1"/><rect x="0" y="2" width="5" height="1"/></svg>
<svg style="position:absolute;left:669px;top:573px" width="5" height="3" fill="#000" shape-rendering="crispEdges"><rect x="0" y="0" width="5" height="1"/><rect x="1" y="1" width="3" height="1"/><rect x="2" y="2" width="1" height="1"/></svg>
<div class="t" style="left:573px;top:592.0px;font-size:12px;line-height:16px;color:#000;">后缀</div>
<div class="ed" style="left:610px;top:589px;width:72px;height:24px"></div>
<div class="cb" style="left:575px;top:623px;width:11px;height:11px"></div>
<div class="t" style="left:593px;top:621.0px;font-size:12px;line-height:16px;color:#000;">字词间隔</div>
<div class="gb" style="left:694px;top:473px;width:150px;height:202px"></div>
<div class="t gt" style="left:702px;top:465px;padding:0 3px">自动日期</div>
<div style="position:absolute;left:824px;top:472px;width:3px;height:3px;background:#f0f0f0"></div>
<div class="cb" style="left:811px;top:468px;width:11px;height:11px"></div>
<div style="position:absolute;left:814px;top:471px;width:7px;height:7px;line-height:0"><svg width="7" height="7" shape-rendering="crispEdges" fill="#000"><rect x="6" y="0" width="1" height="1"/><rect x="5" y="1" width="2" height="1"/><rect x="0" y="2" width="1" height="1"/><rect x="4" y="2" width="3" height="1"/><rect x="0" y="3" width="2" height="1"/><rect x="3" y="3" width="3" height="1"/><rect x="0" y="4" width="5" height="1"/><rect x="1" y="5" width="3" height="1"/><rect x="2" y="6" width="1" height="1"/></svg></div>
<div class="bt" style="left:827px;top:464px;width:14px;height:19px;background:#f0f0f0"></div>
<div class="t" style="left:827px;top:464px;width:16px;height:21px;line-height:21px;text-align:center;font-size:12px;">R</div>
<div class="t" style="left:701px;top:495.0px;font-size:12px;line-height:16px;color:#000;">模式</div>
<div class="ed" style="left:741px;top:489px;width:97px;height:23px"></div>
<div class="bt" style="left:822px;top:491px;width:15px;height:19px;background:#f0f0f0"></div>
<svg style="position:absolute;left:827px;top:500px" width="7" height="4" fill="#000" shape-rendering="crispEdges"><rect x="0" y="0" width="7" height="1"/><rect x="1" y="1" width="5" height="1"/><rect x="2" y="2" width="3" height="1"/><rect x="3" y="3" width="1" height="1"/></svg>
<div class="t" style="left:745px;top:493px;width:76px;overflow:hidden;line-height:16px">无</div>
<div class="t" style="left:707px;top:519.0px;font-size:12px;line-height:16px;color:#000;">类型</div>
<div class="ed" style="left:741px;top:519px;width:97px;height:23px"></div>
<div class="bt" style="left:822px;top:521px;width:15px;height:19px;background:#f0f0f0"></div>
<svg style="position:absolute;left:827px;top:530px" width="7" height="4" fill="#000" shape-rendering="crispEdges"><rect x="0" y="0" width="7" height="1"/><rect x="1" y="1" width="5" height="1"/><rect x="2" y="2" width="3" height="1"/><rect x="3" y="3" width="1" height="1"/></svg>
<div class="t" style="left:745px;top:523px;width:76px;overflow:hidden;line-height:16px">创建时间(当前日期)</div>
<div style="position:absolute;left:693px;top:552px;width:42px;height:18px;background:#f0f0f0"></div>
<div class="t" style="left:703px;top:554.0px;font-size:12px;line-height:16px;color:#000;">格式</div>
<div class="ed" style="left:741px;top:549px;width:97px;height:23px"></div>
<div class="bt" style="left:822px;top:551px;width:15px;height:19px;background:#f0f0f0"></div>
<svg style="position:absolute;left:827px;top:560px" width="7" height="4" fill="#000" shape-rendering="crispEdges"><rect x="0" y="0" width="7" height="1"/><rect x="1" y="1" width="5" height="1"/><rect x="2" y="2" width="3" height="1"/><rect x="3" y="3" width="1" height="1"/></svg>
<div class="t" style="left:745px;top:553px;width:76px;overflow:hidden;line-height:16px">日月年</div>
<div class="t" style="left:709px;top:586.0px;font-size:12px;line-height:16px;color:#000;">分隔</div>
<div class="ed" style="left:741px;top:581px;width:26px;height:24px"></div>
<div class="t" style="left:776px;top:586.0px;font-size:12px;line-height:16px;color:#000;">连接</div>
<div class="ed" style="left:808px;top:581px;width:30px;height:24px"></div>
<div class="t" style="left:704px;top:614.0px;font-size:12px;line-height:16px;color:#000;">自定义</div>
<div class="ed" style="left:755px;top:611px;width:82px;height:24px"></div>
<div class="cb" style="left:705px;top:649px;width:11px;height:11px"></div>
<div class="t" style="left:724px;top:647.0px;font-size:12px;line-height:16px;color:#000;">中心</div>
<div class="t" style="left:755px;top:647.0px;font-size:12px;line-height:16px;color:#000;">偏移</div>
<div class="ed" style="left:790px;top:642px;width:27px;height:24px"></div>
<div class="t" style="left:794px;top:646.0px;font-size:12px;line-height:16px;color:#000;">0</div>
<div class="bt" style="left:825px;top:642px;width:15px;height:11px;background:#f0f0f0"></div>
<div class="bt" style="left:825px;top:655px;width:15px;height:11px;background:#f0f0f0"></div>
<svg style="position:absolute;left:831px;top:647px" width="5" height="3" fill="#000" shape-rendering="crispEdges"><rect x="2" y="0" width="1" height="1"/><rect x="1" y="1" width="3" height="1"/><rect x="0" y="2" width="5" height="1"/></svg>
<svg style="position:absolute;left:831px;top:660px" width="5" height="3" fill="#000" shape-rendering="crispEdges"><rect x="0" y="0" width="5" height="1"/><rect x="1" y="1" width="3" height="1"/><rect x="2" y="2" width="1" height="1"/></svg>
<div class="gb" style="left:852px;top:473px;width:203px;height:202px"></div>
<div class="t gt" style="left:860px;top:465px;padding:0 3px">编号</div>
<div style="position:absolute;left:1032px;top:472px;width:3px;height:3px;background:#f0f0f0"></div>
<div class="cb" style="left:1019px;top:468px;width:11px;height:11px"></div>
<div style="position:absolute;left:1022px;top:471px;width:7px;height:7px;line-height:0"><svg width="7" height="7" shape-rendering="crispEdges" fill="#000"><rect x="6" y="0" width="1" height="1"/><rect x="5" y="1" width="2" height="1"/><rect x="0" y="2" width="1" height="1"/><rect x="4" y="2" width="3" height="1"/><rect x="0" y="3" width="2" height="1"/><rect x="3" y="3" width="3" height="1"/><rect x="0" y="4" width="5" height="1"/><rect x="1" y="5" width="3" height="1"/><rect x="2" y="6" width="1" height="1"/></svg></div>
<div class="bt" style="left:1035px;top:464px;width:14px;height:19px;background:#f0f0f0"></div>
<div class="t" style="left:1035px;top:464px;width:16px;height:21px;line-height:21px;text-align:center;font-size:12px;">R</div>
<div class="t" style="left:857px;top:494.0px;font-size:12px;line-height:16px;color:#000;">模式</div>
<div class="ed" style="left:892px;top:489px;width:65px;height:23px"></div>
<div class="bt" style="left:941px;top:491px;width:15px;height:19px;background:#f0f0f0"></div>
<svg style="position:absolute;left:946px;top:500px" width="7" height="4" fill="#000" shape-rendering="crispEdges"><rect x="0" y="0" width="7" height="1"/><rect x="1" y="1" width="5" height="1"/><rect x="2" y="2" width="3" height="1"/><rect x="3" y="3" width="1" height="1"/></svg>
<div class="t" style="left:896px;top:493px;width:44px;overflow:hidden;line-height:16px">无</div>
<div class="t" style="left:973px;top:494.0px;font-size:12px;line-height:16px;color:#000;">在</div>
<div class="ed" style="left:992px;top:489px;width:36px;height:24px"></div>
<div class="t" style="left:996px;top:493.0px;font-size:12px;line-height:16px;color:#000;">0</div>
<div class="bt" style="left:1032px;top:492px;width:15px;height:11px;background:#f0f0f0"></div>
<div class="bt" style="left:1032px;top:505px;width:15px;height:11px;background:#f0f0f0"></div>
<svg style="position:absolute;left:1038px;top:497px" width="5" height="3" fill="#000" shape-rendering="crispEdges"><rect x="2" y="0" width="1" height="1"/><rect x="1" y="1" width="3" height="1"/><rect x="0" y="2" width="5" height="1"/></svg>
<svg style="position:absolute;left:1038px;top:510px" width="5" height="3" fill="#000" shape-rendering="crispEdges"><rect x="0" y="0" width="5" height="1"/><rect x="1" y="1" width="3" height="1"/><rect x="2" y="2" width="1" height="1"/></svg>
<div class="t" style="left:859px;top:522.0px;font-size:12px;line-height:16px;color:#000;">开始</div>
<div class="ed" style="left:892px;top:519px;width:40px;height:24px"></div>
<div class="t" style="left:896px;top:523.0px;font-size:12px;line-height:16px;color:#000;">1</div>
<div class="bt" style="left:936px;top:519px;width:15px;height:11px;background:#f0f0f0"></div>
<div class="bt" style="left:936px;top:532px;width:15px;height:11px;background:#f0f0f0"></div>
<svg style="position:absolute;left:942px;top:524px" width="5" height="3" fill="#000" shape-rendering="crispEdges"><rect x="2" y="0" width="1" height="1"/><rect x="1" y="1" width="3" height="1"/><rect x="0" y="2" width="5" height="1"/></svg>
<svg style="position:absolute;left:942px;top:537px" width="5" height="3" fill="#000" shape-rendering="crispEdges"><rect x="0" y="0" width="5" height="1"/><rect x="1" y="1" width="3" height="1"/><rect x="2" y="2" width="1" height="1"/></svg>
<div class="t" style="left:965px;top:520.0px;font-size:12px;line-height:16px;color:#000;">递增</div>
<div class="ed" style="left:992px;top:519px;width:36px;height:24px"></div>
<div class="t" style="left:996px;top:523.0px;font-size:12px;line-height:16px;color:#000;">1</div>
<div class="bt" style="left:1032px;top:521px;width:15px;height:11px;background:#f0f0f0"></div>
<div class="bt" style="left:1032px;top:534px;width:15px;height:11px;background:#f0f0f0"></div>
<svg style="position:absolute;left:1038px;top:526px" width="5" height="3" fill="#000" shape-rendering="crispEdges"><rect x="2" y="0" width="1" height="1"/><rect x="1" y="1" width="3" height="1"/><rect x="0" y="2" width="5" height="1"/></svg>
<svg style="position:absolute;left:1038px;top:539px" width="5" height="3" fill="#000" shape-rendering="crispEdges"><rect x="0" y="0" width="5" height="1"/><rect x="1" y="1" width="3" height="1"/><rect x="2" y="2" width="1" height="1"/></svg>
<div class="t" style="left:859px;top:548.0px;font-size:12px;line-height:16px;color:#000;">位数</div>
<div class="ed" style="left:892px;top:545px;width:40px;height:23px"></div>
<div class="t" style="left:896px;top:549.0px;font-size:12px;line-height:16px;color:#000;">0</div>
<div class="bt" style="left:936px;top:545px;width:15px;height:11px;background:#f0f0f0"></div>
<div class="bt" style="left:936px;top:558px;width:15px;height:11px;background:#f0f0f0"></div>
<svg style="position:absolute;left:942px;top:550px" width="5" height="3" fill="#000" shape-rendering="crispEdges"><rect x="2" y="0" width="1" height="1"/><rect x="1" y="1" width="3" height="1"/><rect x="0" y="2" width="5" height="1"/></svg>
<svg style="position:absolute;left:942px;top:563px" width="5" height="3" fill="#000" shape-rendering="crispEdges"><rect x="0" y="0" width="5" height="1"/><rect x="1" y="1" width="3" height="1"/><rect x="2" y="2" width="1" height="1"/></svg>
<div class="t" style="left:965px;top:548.0px;font-size:12px;line-height:16px;color:#000;">分隔</div>
<div class="ed" style="left:992px;top:545px;width:36px;height:24px"></div>
<div class="t" style="left:857px;top:574.0px;font-size:12px;line-height:16px;color:#000;">打断</div>
<div class="ed" style="left:892px;top:570px;width:40px;height:24px"></div>
<div class="t" style="left:896px;top:574.0px;font-size:12px;line-height:16px;color:#000;">0</div>
<div class="bt" style="left:936px;top:571px;width:15px;height:11px;background:#f0f0f0"></div>
<div class="bt" style="left:936px;top:584px;width:15px;height:12px;background:#f0f0f0"></div>
<svg style="position:absolute;left:942px;top:576px" width="5" height="3" fill="#000" shape-rendering="crispEdges"><rect x="2" y="0" width="1" height="1"/><rect x="1" y="1" width="3" height="1"/><rect x="0" y="2" width="5" height="1"/></svg>
<svg style="position:absolute;left:942px;top:589px" width="5" height="3" fill="#000" shape-rendering="crispEdges"><rect x="0" y="0" width="5" height="1"/><rect x="1" y="1" width="3" height="1"/><rect x="2" y="2" width="1" height="1"/></svg>
<div class="cb" style="left:991px;top:577px;width:11px;height:11px"></div>
<div class="t" style="left:1008px;top:575.0px;font-size:12px;line-height:16px;color:#000;">文件夹</div>
<div class="t" style="left:857px;top:608.0px;font-size:12px;line-height:16px;color:#000;">类型</div>
<div class="ed" style="left:892px;top:605px;width:144px;height:22px"></div>
<div class="bt" style="left:1020px;top:607px;width:15px;height:18px;background:#f0f0f0"></div>
<svg style="position:absolute;left:1025px;top:616px" width="7" height="4" fill="#000" shape-rendering="crispEdges"><rect x="0" y="0" width="7" height="1"/><rect x="1" y="1" width="5" height="1"/><rect x="2" y="2" width="3" height="1"/><rect x="3" y="3" width="1" height="1"/></svg>
<div class="t" style="left:896px;top:609px;width:123px;overflow:hidden;line-height:16px">基数 10 (十进制)</div>
<div class="t" style="left:857px;top:642.0px;font-size:12px;line-height:16px;color:#000;">罗马数字</div>
<div class="ed" style="left:960px;top:638px;width:78px;height:23px"></div>
<div class="bt" style="left:1022px;top:640px;width:15px;height:19px;background:#f0f0f0"></div>
<svg style="position:absolute;left:1027px;top:649px" width="7" height="4" fill="#000" shape-rendering="crispEdges"><rect x="0" y="0" width="7" height="1"/><rect x="1" y="1" width="5" height="1"/><rect x="2" y="2" width="3" height="1"/><rect x="3" y="3" width="1" height="1"/></svg>
<div class="t" style="left:964px;top:642px;width:57px;overflow:hidden;line-height:16px">无</div>
<div class="gb" style="left:8px;top:690px;width:534px;height:49px"></div>
<div class="t gt" style="left:16px;top:682px;padding:0 3px">移动<span style="padding:0 1.5px">/</span>复制部件</div>
<div style="position:absolute;left:522px;top:689px;width:4px;height:3px;background:#f0f0f0"></div>
<div class="cb" style="left:509px;top:685px;width:11px;height:11px"></div>
<div style="position:absolute;left:512px;top:688px;width:7px;height:7px;line-height:0"><svg width="7" height="7" shape-rendering="crispEdges" fill="#000"><rect x="6" y="0" width="1" height="1"/><rect x="5" y="1" width="2" height="1"/><rect x="0" y="2" width="1" height="1"/><rect x="4" y="2" width="3" height="1"/><rect x="0" y="3" width="2" height="1"/><rect x="3" y="3" width="3" height="1"/><rect x="0" y="4" width="5" height="1"/><rect x="1" y="5" width="3" height="1"/><rect x="2" y="6" width="1" height="1"/></svg></div>
<div class="bt" style="left:526px;top:681px;width:14px;height:19px;background:#f0f0f0"></div>
<div class="t" style="left:526px;top:681px;width:16px;height:21px;line-height:21px;text-align:center;font-size:12px;">R</div>
<div class="ed" style="left:19px;top:706px;width:111px;height:23px"></div>
<div class="bt" style="left:114px;top:708px;width:15px;height:19px;background:#f0f0f0"></div>
<svg style="position:absolute;left:119px;top:717px" width="7" height="4" fill="#000" shape-rendering="crispEdges"><rect x="0" y="0" width="7" height="1"/><rect x="1" y="1" width="5" height="1"/><rect x="2" y="2" width="3" height="1"/><rect x="3" y="3" width="1" height="1"/></svg>
<div class="t" style="left:23px;top:710px;width:90px;overflow:hidden;line-height:16px">无</div>
<div class="ed" style="left:139px;top:706px;width:37px;height:24px"></div>
<div class="t" style="left:143px;top:710.0px;font-size:12px;line-height:16px;color:#000;">1</div>
<div class="bt" style="left:178px;top:706px;width:15px;height:11px;background:#f0f0f0"></div>
<div class="bt" style="left:178px;top:719px;width:15px;height:11px;background:#f0f0f0"></div>
<svg style="position:absolute;left:184px;top:711px" width="5" height="3" fill="#000" shape-rendering="crispEdges"><rect x="2" y="0" width="1" height="1"/><rect x="1" y="1" width="3" height="1"/><rect x="0" y="2" width="5" height="1"/></svg>
<svg style="position:absolute;left:184px;top:724px" width="5" height="3" fill="#000" shape-rendering="crispEdges"><rect x="0" y="0" width="5" height="1"/><rect x="1" y="1" width="3" height="1"/><rect x="2" y="2" width="1" height="1"/></svg>
<div class="ed" style="left:209px;top:706px;width:111px;height:23px"></div>
<div class="bt" style="left:304px;top:708px;width:15px;height:19px;background:#f0f0f0"></div>
<svg style="position:absolute;left:309px;top:717px" width="7" height="4" fill="#000" shape-rendering="crispEdges"><rect x="0" y="0" width="7" height="1"/><rect x="1" y="1" width="5" height="1"/><rect x="2" y="2" width="3" height="1"/><rect x="3" y="3" width="1" height="1"/></svg>
<div class="t" style="left:213px;top:710px;width:90px;overflow:hidden;line-height:16px">无</div>
<div class="ed" style="left:330px;top:706px;width:37px;height:24px"></div>
<div class="t" style="left:334px;top:710.0px;font-size:12px;line-height:16px;color:#000;">1</div>
<div class="bt" style="left:369px;top:706px;width:15px;height:11px;background:#f0f0f0"></div>
<div class="bt" style="left:369px;top:719px;width:15px;height:11px;background:#f0f0f0"></div>
<svg style="position:absolute;left:375px;top:711px" width="5" height="3" fill="#000" shape-rendering="crispEdges"><rect x="2" y="0" width="1" height="1"/><rect x="1" y="1" width="3" height="1"/><rect x="0" y="2" width="5" height="1"/></svg>
<svg style="position:absolute;left:375px;top:724px" width="5" height="3" fill="#000" shape-rendering="crispEdges"><rect x="0" y="0" width="5" height="1"/><rect x="1" y="1" width="3" height="1"/><rect x="2" y="2" width="1" height="1"/></svg>
<div class="t" style="left:400px;top:710.0px;font-size:12px;line-height:16px;color:#000;">分隔</div>
<div class="ed" style="left:435px;top:706px;width:87px;height:24px"></div>
<div class="gb" style="left:554px;top:690px;width:290px;height:49px"></div>
<div class="t gt" style="left:562px;top:682px;padding:0 3px">附加文件夹名</div>
<div style="position:absolute;left:824px;top:689px;width:4px;height:3px;background:#f0f0f0"></div>
<div class="cb" style="left:811px;top:685px;width:11px;height:11px"></div>
<div style="position:absolute;left:814px;top:688px;width:7px;height:7px;line-height:0"><svg width="7" height="7" shape-rendering="crispEdges" fill="#000"><rect x="6" y="0" width="1" height="1"/><rect x="5" y="1" width="2" height="1"/><rect x="0" y="2" width="1" height="1"/><rect x="4" y="2" width="3" height="1"/><rect x="0" y="3" width="2" height="1"/><rect x="3" y="3" width="3" height="1"/><rect x="0" y="4" width="5" height="1"/><rect x="1" y="5" width="3" height="1"/><rect x="2" y="6" width="1" height="1"/></svg></div>
<div class="bt" style="left:828px;top:681px;width:14px;height:19px;background:#f0f0f0"></div>
<div class="t" style="left:828px;top:681px;width:16px;height:21px;line-height:21px;text-align:center;font-size:12px;">R</div>
<div class="t" style="left:565px;top:710.0px;font-size:12px;line-height:16px;color:#000;">名称</div>
<div class="ed" style="left:605px;top:706px;width:60px;height:23px"></div>
<div class="bt" style="left:649px;top:708px;width:15px;height:19px;background:#f0f0f0"></div>
<svg style="position:absolute;left:654px;top:717px" width="7" height="4" fill="#000" shape-rendering="crispEdges"><rect x="0" y="0" width="7" height="1"/><rect x="1" y="1" width="5" height="1"/><rect x="2" y="2" width="3" height="1"/><rect x="3" y="3" width="1" height="1"/></svg>
<div class="t" style="left:609px;top:710px;width:39px;overflow:hidden;line-height:16px">无</div>
<div class="t" style="left:677px;top:710.0px;font-size:12px;line-height:16px;color:#000;">分隔</div>
<div class="ed" style="left:706px;top:706px;width:33px;height:24px"></div>
<div class="t" style="left:750px;top:710.0px;font-size:12px;line-height:16px;color:#000;">层级</div>
<div class="ed" style="left:792px;top:706px;width:26px;height:24px"></div>
<div class="t" style="left:796px;top:710.0px;font-size:12px;line-height:16px;color:#000;">1</div>
<div class="bt" style="left:820px;top:706px;width:15px;height:11px;background:#f0f0f0"></div>
<div class="bt" style="left:820px;top:719px;width:15px;height:11px;background:#f0f0f0"></div>
<svg style="position:absolute;left:826px;top:711px" width="5" height="3" fill="#000" shape-rendering="crispEdges"><rect x="2" y="0" width="1" height="1"/><rect x="1" y="1" width="3" height="1"/><rect x="0" y="2" width="5" height="1"/></svg>
<svg style="position:absolute;left:826px;top:724px" width="5" height="3" fill="#000" shape-rendering="crispEdges"><rect x="0" y="0" width="5" height="1"/><rect x="1" y="1" width="3" height="1"/><rect x="2" y="2" width="1" height="1"/></svg>
<div class="gb" style="left:852px;top:690px;width:203px;height:49px"></div>
<div class="t gt" style="left:860px;top:682px;padding:0 3px">扩展名</div>
<div style="position:absolute;left:1031px;top:689px;width:4px;height:3px;background:#f0f0f0"></div>
<div class="cb" style="left:1018px;top:685px;width:11px;height:11px"></div>
<div style="position:absolute;left:1021px;top:688px;width:7px;height:7px;line-height:0"><svg width="7" height="7" shape-rendering="crispEdges" fill="#000"><rect x="6" y="0" width="1" height="1"/><rect x="5" y="1" width="2" height="1"/><rect x="0" y="2" width="1" height="1"/><rect x="4" y="2" width="3" height="1"/><rect x="0" y="3" width="2" height="1"/><rect x="3" y="3" width="3" height="1"/><rect x="0" y="4" width="5" height="1"/><rect x="1" y="5" width="3" height="1"/><rect x="2" y="6" width="1" height="1"/></svg></div>
<div class="bt" style="left:1035px;top:681px;width:14px;height:19px;background:#f0f0f0"></div>
<div class="t" style="left:1035px;top:681px;width:16px;height:21px;line-height:21px;text-align:center;font-size:12px;">R</div>
<div class="ed" style="left:866px;top:706px;width:72px;height:23px"></div>
<div class="bt" style="left:922px;top:708px;width:15px;height:19px;background:#f0f0f0"></div>
<svg style="position:absolute;left:927px;top:717px" width="7" height="4" fill="#000" shape-rendering="crispEdges"><rect x="0" y="0" width="7" height="1"/><rect x="1" y="1" width="5" height="1"/><rect x="2" y="2" width="3" height="1"/><rect x="3" y="3" width="1" height="1"/></svg>
<div class="t" style="left:870px;top:710px;width:51px;overflow:hidden;line-height:16px">同一个</div>
<div class="ed" style="left:946px;top:706px;width:98px;height:23px"></div>
<div style="position:absolute;left:10px;top:753px;width:1041px;height:4px;background:linear-gradient(to right,#cbcbcb,#dadada 45%,#e0e0e0 65%,#ececec)"></div>
<div class="gb" style="left:8px;top:776px;width:668px;height:110px"></div>
<div class="t gt" style="left:16px;top:768px;padding:0 3px">过滤器</div>
<div class="bt" style="left:659px;top:766px;width:14px;height:19px;background:#f0f0f0"></div>
<div class="t" style="left:659px;top:766px;width:16px;height:21px;line-height:21px;text-align:center;font-size:12px;">R</div>
<div class="t" style="left:13px;top:794.0px;font-size:12px;line-height:16px;color:#000;">掩码</div>
<svg style="position:absolute;left:8px;top:805px" width="30" height="30" viewBox="8 805 30 30">
<rect x="21.5" y="816.5" width="8" height="10" fill="#fff" stroke="#3c3c3c"/>
<path d="M23 818.5 H28 M23 820.5 H26 M27 820.5 H28 M25 822.5 H27 M24.5 824.5 H25.5" stroke="#3c3c3c" stroke-width="1"/>
<path d="M16 822.7 H24 L21 826 V830 H19 V826 Z" fill="#fff" stroke="#fff" stroke-width="1.4"/>
<path d="M16 822.7 H24 L21 826 V830 H19 V826 Z" fill="#3c3c3c"/>
</svg>
<div class="ed" style="left:52px;top:791px;width:175px;height:24px"></div>
<div class="t" style="left:56px;top:795.0px;font-size:12px;line-height:16px;color:#000;">*</div>
<div style="position:absolute;left:238px;top:794px"><svg width="14" height="16" viewBox="0 0 14 16"><path d="M2 7 Q2 2.5 7 2.5 L9 2.5 L9 0.5 L13 4 L9 7.5 L9 5.5 L7 5.5 Q4.5 5.5 4.5 8 Z" fill="#2598ee"/><path d="M12 9 Q12 13.5 7 13.5 L5 13.5 L5 15.5 L1 12 L5 8.5 L5 10.5 L7 10.5 Q9.5 10.5 9.5 8 Z" fill="#2598ee"/></svg></div>
<div class="cb" style="left:56px;top:827px;width:11px;height:11px"></div>
<div class="t" style="left:74px;top:825.0px;font-size:12px;line-height:16px;color:#000;">区分大小写</div>
<div class="cb" style="left:160px;top:827px;width:11px;height:11px"></div>
<div class="t" style="left:178px;top:825.0px;font-size:12px;line-height:16px;color:#000;">正则表达</div>
<div class="t" style="left:209px;top:854.0px;font-size:12px;line-height:16px;color:#000;">条件</div>
<div class="ed" style="left:269px;top:851px;width:359px;height:24px"></div>
<div style="position:absolute;left:637px;top:853px"><svg width="14" height="16" viewBox="0 0 14 16"><path d="M2 7 Q2 2.5 7 2.5 L9 2.5 L9 0.5 L13 4 L9 7.5 L9 5.5 L7 5.5 Q4.5 5.5 4.5 8 Z" fill="#2598ee"/><path d="M12 9 Q12 13.5 7 13.5 L5 13.5 L5 15.5 L1 12 L5 8.5 L5 10.5 L7 10.5 Q9.5 10.5 9.5 8 Z" fill="#2598ee"/></svg></div>
<div class="cb" style="left:271px;top:795px;width:11px;height:11px"></div>
<div style="position:absolute;left:274px;top:798px;width:7px;height:7px;line-height:0"><svg width="7" height="7" shape-rendering="crispEdges" fill="#000"><rect x="6" y="0" width="1" height="1"/><rect x="5" y="1" width="2" height="1"/><rect x="0" y="2" width="1" height="1"/><rect x="4" y="2" width="3" height="1"/><rect x="0" y="3" width="2" height="1"/><rect x="3" y="3" width="3" height="1"/><rect x="0" y="4" width="5" height="1"/><rect x="1" y="5" width="3" height="1"/><rect x="2" y="6" width="1" height="1"/></svg></div>
<div class="t" style="left:289px;top:793.0px;font-size:12px;line-height:16px;color:#000;">文件夹</div>
<div class="cb" style="left:340px;top:795px;width:11px;height:11px"></div>
<div class="t" style="left:357px;top:793.0px;font-size:12px;line-height:16px;color:#000;">隐藏</div>
<div class="cb" style="left:271px;top:819px;width:11px;height:11px"></div>
<div style="position:absolute;left:274px;top:822px;width:7px;height:7px;line-height:0"><svg width="7" height="7" shape-rendering="crispEdges" fill="#000"><rect x="6" y="0" width="1" height="1"/><rect x="5" y="1" width="2" height="1"/><rect x="0" y="2" width="1" height="1"/><rect x="4" y="2" width="3" height="1"/><rect x="0" y="3" width="2" height="1"/><rect x="3" y="3" width="3" height="1"/><rect x="0" y="4" width="5" height="1"/><rect x="1" y="5" width="3" height="1"/><rect x="2" y="6" width="1" height="1"/></svg></div>
<div class="t" style="left:289px;top:817.0px;font-size:12px;line-height:16px;color:#000;">文件</div>
<div class="cb" style="left:340px;top:819px;width:11px;height:11px"></div>
<div class="t" style="left:357px;top:817.0px;font-size:12px;line-height:16px;color:#000;">子文件夹</div>
<div class="t" style="left:429px;top:792.0px;font-size:12px;line-height:16px;color:#000;">最小名称长度</div>
<div class="ed" style="left:509px;top:788px;width:33px;height:23px"></div>
<div class="t" style="left:513px;top:792.0px;font-size:12px;line-height:16px;color:#000;">0</div>
<div class="bt" style="left:547px;top:788px;width:15px;height:10px;background:#f0f0f0"></div>
<div class="bt" style="left:547px;top:800px;width:15px;height:11px;background:#f0f0f0"></div>
<svg style="position:absolute;left:553px;top:792px" width="5" height="3" fill="#000" shape-rendering="crispEdges"><rect x="2" y="0" width="1" height="1"/><rect x="1" y="1" width="3" height="1"/><rect x="0" y="2" width="5" height="1"/></svg>
<svg style="position:absolute;left:553px;top:805px" width="5" height="3" fill="#000" shape-rendering="crispEdges"><rect x="0" y="0" width="5" height="1"/><rect x="1" y="1" width="3" height="1"/><rect x="2" y="2" width="1" height="1"/></svg>
<div class="t" style="left:570px;top:792.0px;font-size:12px;line-height:16px;color:#000;">最大</div>
<div class="ed" style="left:598px;top:788px;width:33px;height:23px"></div>
<div class="t" style="left:602px;top:792.0px;font-size:12px;line-height:16px;color:#000;">0</div>
<div class="bt" style="left:636px;top:788px;width:15px;height:10px;background:#f0f0f0"></div>
<div class="bt" style="left:636px;top:800px;width:15px;height:11px;background:#f0f0f0"></div>
<svg style="position:absolute;left:642px;top:792px" width="5" height="3" fill="#000" shape-rendering="crispEdges"><rect x="2" y="0" width="1" height="1"/><rect x="1" y="1" width="3" height="1"/><rect x="0" y="2" width="5" height="1"/></svg>
<svg style="position:absolute;left:642px;top:805px" width="5" height="3" fill="#000" shape-rendering="crispEdges"><rect x="0" y="0" width="5" height="1"/><rect x="1" y="1" width="3" height="1"/><rect x="2" y="2" width="1" height="1"/></svg>
<div class="t" style="left:429px;top:816.0px;font-size:12px;line-height:16px;color:#000;">最小路径长度</div>
<div class="ed" style="left:509px;top:815px;width:33px;height:24px"></div>
<div class="t" style="left:513px;top:819.0px;font-size:12px;line-height:16px;color:#000;">0</div>
<div class="bt" style="left:547px;top:815px;width:15px;height:11px;background:#f0f0f0"></div>
<div class="bt" style="left:547px;top:828px;width:15px;height:11px;background:#f0f0f0"></div>
<svg style="position:absolute;left:553px;top:820px" width="5" height="3" fill="#000" shape-rendering="crispEdges"><rect x="2" y="0" width="1" height="1"/><rect x="1" y="1" width="3" height="1"/><rect x="0" y="2" width="5" height="1"/></svg>
<svg style="position:absolute;left:553px;top:833px" width="5" height="3" fill="#000" shape-rendering="crispEdges"><rect x="0" y="0" width="5" height="1"/><rect x="1" y="1" width="3" height="1"/><rect x="2" y="2" width="1" height="1"/></svg>
<div class="t" style="left:570px;top:816.0px;font-size:12px;line-height:16px;color:#000;">最大</div>
<div class="ed" style="left:598px;top:815px;width:33px;height:24px"></div>
<div class="t" style="left:602px;top:819.0px;font-size:12px;line-height:16px;color:#000;">0</div>
<div class="bt" style="left:636px;top:815px;width:15px;height:11px;background:#f0f0f0"></div>
<div class="bt" style="left:636px;top:828px;width:15px;height:11px;background:#f0f0f0"></div>
<svg style="position:absolute;left:642px;top:820px" width="5" height="3" fill="#000" shape-rendering="crispEdges"><rect x="2" y="0" width="1" height="1"/><rect x="1" y="1" width="3" height="1"/><rect x="0" y="2" width="5" height="1"/></svg>
<svg style="position:absolute;left:642px;top:833px" width="5" height="3" fill="#000" shape-rendering="crispEdges"><rect x="0" y="0" width="5" height="1"/><rect x="1" y="1" width="3" height="1"/><rect x="2" y="2" width="1" height="1"/></svg>
<div class="gb" style="left:685px;top:775px;width:369px;height:78px"></div>
<div class="t gt" style="left:692px;top:767px;padding:0 3px">复制<span style="padding:0 1.5px">/</span>移动到另一个位置</div>
<div class="bt" style="left:1035px;top:766px;width:14px;height:19px;background:#f0f0f0"></div>
<div class="t" style="left:1035px;top:766px;width:16px;height:21px;line-height:21px;text-align:center;font-size:12px;">R</div>
<div class="t" style="left:694px;top:791.0px;font-size:12px;line-height:16px;color:#000;">路径</div>
<svg style="position:absolute;left:690px;top:808px" width="30" height="26" viewBox="690 808 30 26">
<defs><linearGradient id="cf" x1="0" y1="0" x2="1" y2="1"><stop offset="0" stop-color="#fbf6a8"/><stop offset="0.6" stop-color="#ecc840"/><stop offset="1" stop-color="#d8a020"/></linearGradient></defs>
<path d="M696.5 813.5 H702 L704.5 816 V823.5 H696.5 Z" fill="#f6f9fe" stroke="#8fa8d0"/>
<path d="M696.5 823.5 H700" stroke="#1e3050" stroke-width="1"/>
<path d="M702 813.5 V816 H704.5" fill="#dde6f4" stroke="#1e3050" stroke-width="1"/>
<path d="M706.3 814.6 H708.6 Q709.6 814.6 709.6 815.8 V817.2" stroke="#2a3580" stroke-width="1.4" fill="none"/>
<path d="M707.8 816.8 H711.4 L709.6 819 Z" fill="#2a3580"/>
<path d="M700.4 818.6 H703.8 L704.4 819.8 H710.6 V827.6 H700.4 Z" fill="url(#cf)" stroke="#8a6a50" stroke-width="0.8"/>
<path d="M701 827.4 H710.4 V820" stroke="#2a2010" stroke-width="0.9" fill="none"/>
</svg>
<div class="ed" style="left:733px;top:791px;width:282px;height:24px"></div>
<svg style="position:absolute;left:1023px;top:796px" width="14" height="12" viewBox="0 0 14 12" shape-rendering="crispEdges"><rect x="5" y="0" width="8" height="3" fill="#d9b476"/><rect x="6" y="1" width="6" height="1" fill="#f4e8d0"/><rect x="0" y="2" width="13" height="9" fill="#d9b476"/><rect x="5" y="2" width="8" height="1" fill="#e6c892"/></svg>
<div class="cb" style="left:733px;top:827px;width:11px;height:11px"></div>
<div style="position:absolute;left:736px;top:830px;width:7px;height:7px;line-height:0"><svg width="7" height="7" shape-rendering="crispEdges" fill="#000"><rect x="6" y="0" width="1" height="1"/><rect x="5" y="1" width="2" height="1"/><rect x="0" y="2" width="1" height="1"/><rect x="4" y="2" width="3" height="1"/><rect x="0" y="3" width="2" height="1"/><rect x="3" y="3" width="3" height="1"/><rect x="0" y="4" width="5" height="1"/><rect x="1" y="5" width="3" height="1"/><rect x="2" y="6" width="1" height="1"/></svg></div>
<div class="t" style="left:751px;top:825.0px;font-size:12px;line-height:16px;color:#000;">复制不移动</div>
<div style="position:absolute;left:883px;top:880px;width:168px;height:4px;background:#ffd400"></div>
<div class="gb" style="left:8px;top:902px;width:735px;height:68px"></div>
<div class="t gt" style="left:16px;top:894px;padding:0 3px">特殊</div>
<div class="cb" style="left:24px;top:929px;width:11px;height:11px"></div>
<div class="t" style="left:47px;top:919.0px;font-size:12px;line-height:16px;color:#000;">更改文件属性</div>
<div class="cb" style="left:206px;top:929px;width:11px;height:11px"></div>
<div class="t" style="left:229px;top:919.0px;font-size:12px;line-height:16px;color:#000;">更改文件时间戳</div>
<div class="cb" style="left:400px;top:929px;width:11px;height:11px"></div>
<div class="t" style="left:421px;top:919.0px;font-size:12px;line-height:16px;color:#000;">字符转换</div>
<div class="cb" style="left:582px;top:929px;width:11px;height:11px"></div>
<div class="t" style="left:603px;top:919.0px;font-size:12px;line-height:16px;color:#000;">Javascript 重命名</div>
<svg style="position:absolute;left:46px;top:938px" width="20" height="20" viewBox="46 938 20 20"><defs><linearGradient id="ia" x1="0" y1="0" x2="1" y2="1"><stop offset="0" stop-color="#fff"/><stop offset="1" stop-color="#bfe0fa"/></linearGradient></defs>
<rect x="49.5" y="941.5" width="13" height="13" fill="url(#ia)" stroke="#7894c6"/>
<path d="M52 943.5 H58 M52 952.5 H60" stroke="#7e9cd0"/>
<rect x="52.5" y="945.5" width="7" height="5" fill="#fff" stroke="#86a0d0"/><rect x="53" y="946" width="2" height="1" fill="#0000ff"/>
<path d="M56 948.8 L63.3 941" stroke="#ff5030" stroke-width="2.6"/><path d="M62.2 940 L64.5 942.3" stroke="#e02000" stroke-width="1.6"/>
<circle cx="55.2" cy="948.6" r="0.9" fill="#d03010"/></svg>
<svg style="position:absolute;left:228px;top:938px" width="20" height="20" viewBox="228 938 20 20"><rect x="230.5" y="941.5" width="15" height="14" fill="#6f8cc8" stroke="#5a78c0"/>
<rect x="230" y="941" width="16" height="4.6" fill="#4f7fe0"/><path d="M231 944.3 H237 M238 944.3 H245" stroke="#a8c4f4"/>
<rect x="245" y="945.5" width="1" height="10.5" fill="#2c4460"/><rect x="230" y="955" width="16" height="1" fill="#2c4460"/>
<g fill="#fff"><rect x="231" y="946" width="2" height="2"/><rect x="234" y="946" width="2" height="2"/><rect x="237" y="946" width="2" height="2"/><rect x="240" y="946" width="2" height="2"/><rect x="243" y="946" width="2" height="2"/>
<rect x="231" y="949" width="2" height="2"/><rect x="234" y="949" width="2" height="2"/><rect x="237" y="949" width="2" height="2"/><rect x="243" y="949" width="2" height="2"/>
<rect x="231" y="952" width="2" height="2"/><rect x="234" y="952" width="2" height="2"/><rect x="237" y="952" width="2" height="2"/><rect x="240" y="952" width="2" height="2"/><rect x="243" y="952" width="2" height="2"/></g>
<rect x="239.5" y="948.5" width="3" height="3" fill="#eaffff" stroke="#ff4010" stroke-width="1.3"/></svg>
<svg style="position:absolute;left:422px;top:938px" width="20" height="20" viewBox="422 938 20 20"><defs><linearGradient id="ic" x1="0" y1="0" x2="1" y2="1"><stop offset="0.3" stop-color="#fff"/><stop offset="1" stop-color="#9ec0f0"/></linearGradient></defs>
<rect x="424.5" y="941.5" width="13" height="14" fill="url(#ic)" stroke="#8a9ab8"/>
<path d="M438 942 V956 H425" stroke="#2a4a60" stroke-width="1.2" fill="none"/>
<circle cx="427.5" cy="944.6" r="1.5" fill="#3050d8"/><circle cx="427.5" cy="948.5" r="1.5" fill="#e04a20"/><circle cx="427.5" cy="952.5" r="1.5" fill="#f08010"/>
<path d="M430 944.5 H435 M430 948.5 H435 M430 952.5 H435" stroke="#6a7a98"/></svg>
<svg style="position:absolute;left:603px;top:938px" width="20" height="20" viewBox="603 938 20 20"><defs><linearGradient id="ij" x1="0" y1="0" x2="1" y2="1"><stop offset="0.35" stop-color="#fff"/><stop offset="1" stop-color="#a8c4f0"/></linearGradient></defs>
<path d="M605.5 941.5 H619.5 V952.5 L618 954 H614.5 L613.5 955 H611 L610 954 H606.5 L605.5 953 Z" fill="url(#ij)" stroke="#8494b4"/>
<path d="M620 942 V953 L618.5 954.5" stroke="#2a4460" stroke-width="1.1" fill="none"/>
<path d="M608 944.5 H615" stroke="#6aa050" stroke-width="1.2"/><path d="M607 946.5 H613 M607 948.5 H613 M607 950.5 H611" stroke="#7a8aa8"/>
<path d="M607 954.5 H610 M611.5 954.5 H614 M615.5 954.5 H618" stroke="#3a4a90" stroke-width="1.1"/></svg>
<div class="t" style="left:71px;top:940.0px;font-size:12px;line-height:16px;color:#000;">状态:</div>
<div class="t" style="left:113px;top:940.0px;font-size:12px;line-height:16px;color:#000;">未设置</div>
<div class="t" style="left:253px;top:940.0px;font-size:12px;line-height:16px;color:#000;">状态:</div>
<div class="t" style="left:295px;top:940.0px;font-size:12px;line-height:16px;color:#000;">未设置</div>
<div class="t" style="left:446px;top:940.0px;font-size:12px;line-height:16px;color:#000;">状态:</div>
<div class="t" style="left:488px;top:940.0px;font-size:12px;line-height:16px;color:#000;">未设置</div>
<div class="t" style="left:628px;top:940.0px;font-size:12px;line-height:16px;color:#000;">状态:</div>
<div class="t" style="left:670px;top:940.0px;font-size:12px;line-height:16px;color:#000;">未设置</div>
<div style="position:absolute;left:757px;top:902px;width:74px;height:72px;background:#ff4500"></div>
<div class="t" style="left:761px;top:906.5px;font-size:12px;line-height:16px;font-weight:bold;-webkit-text-stroke:0;color:#fff;">单击 <span style='margin-left:1px'>'?'</span></div>
<div class="t" style="left:761px;top:924.0px;font-size:12px;line-height:16px;font-weight:bold;-webkit-text-stroke:0;color:#fff;">获取帮助 <span style="margin-left:1px;letter-spacing:1.5px">-&gt;</span></div>
<div style="position:absolute;left:839px;top:902px;width:21px;height:25px;border:1px solid;border-color:#fff #a0a0a0 #a0a0a0 #fff;background:#f0f0f0"></div>
<svg style="position:absolute;left:843px;top:908px" width="15" height="15" viewBox="0 0 15 15"><rect x="2.7" y="3.2" width="9.6" height="9.6" fill="#f4f4f4" stroke="#333" stroke-width="1.4"/><path d="M4.5 5 L6.8 7.3 M10.5 5 L8.2 7.3 M4.5 11 L6.8 8.7 M10.5 11 L8.2 8.7" stroke="#888" stroke-width="1"/></svg>
<svg style="position:absolute;left:843px;top:949px" width="15" height="15" viewBox="0 0 15 15"><circle cx="7.5" cy="7.5" r="7" fill="#333"/><text x="7.5" y="11.5" text-anchor="middle" font-size="11" font-weight="bold" fill="#fff" font-family="Liberation Sans">?</text></svg>
<div class="bt" style="left:878px;top:895px;width:66px;height:21px;background:#eef2fa"></div>
<div class="t" style="left:878px;top:896px;width:68px;height:23px;line-height:23px;text-align:center;font-size:12px;">预览</div>
<div class="bt" style="left:878px;top:923px;width:66px;height:21px;background:#eef2fa"></div>
<div class="t" style="left:878px;top:924px;width:68px;height:23px;line-height:23px;text-align:center;font-size:12px;">重置</div>
<div class="bt" style="left:878px;top:951px;width:66px;height:21px;background:#eef2fa"></div>
<div class="t" style="left:878px;top:952px;width:68px;height:23px;line-height:23px;text-align:center;font-size:12px;">恢复(<u>T</u>)</div>
<div class="bt" style="left:960px;top:902px;width:92px;height:66px;background:#d0d6e4"></div>
<div class="t" style="left:960px;top:902px;width:94px;height:68px;line-height:68px;text-align:center;font-size:12px;">重命名</div>
<div style="position:absolute;left:1px;top:1024px;width:1066px;height:1px;background:#f8f8f8"></div>
<div style="position:absolute;left:1px;top:1025px;width:254px;height:15px;border:1px solid;border-color:#a0a0a0 #fff #fff #a0a0a0"></div>
<div style="position:absolute;left:259px;top:1025px;width:204px;height:15px;border:1px solid;border-color:#a0a0a0 #fff #fff #a0a0a0"></div>
<div style="position:absolute;left:467px;top:1025px;width:598px;height:15px;border:1px solid;border-color:#a0a0a0 #fff #fff #a0a0a0"></div>
<div style="position:absolute;left:1px;top:1025px;width:1px;height:16px;background:#f8f8f8"></div>
<div class="t" style="left:4px;top:1025.5px;font-size:12px;line-height:16px;color:#000;">1 个对象 (1 个选择)</div>
<svg style="position:absolute;left:1053px;top:1028px" width="14" height="14" shape-rendering="crispEdges"><path d="M2 12 L12 2 M6 12 L12 6 M10 12 L12 10" stroke="#a0a0a0" stroke-width="1.5"/><path d="M3 13 L13 3 M7 13 L13 7 M11 13 L13 11" stroke="#fff" stroke-width="1"/></svg>
</body></html>
